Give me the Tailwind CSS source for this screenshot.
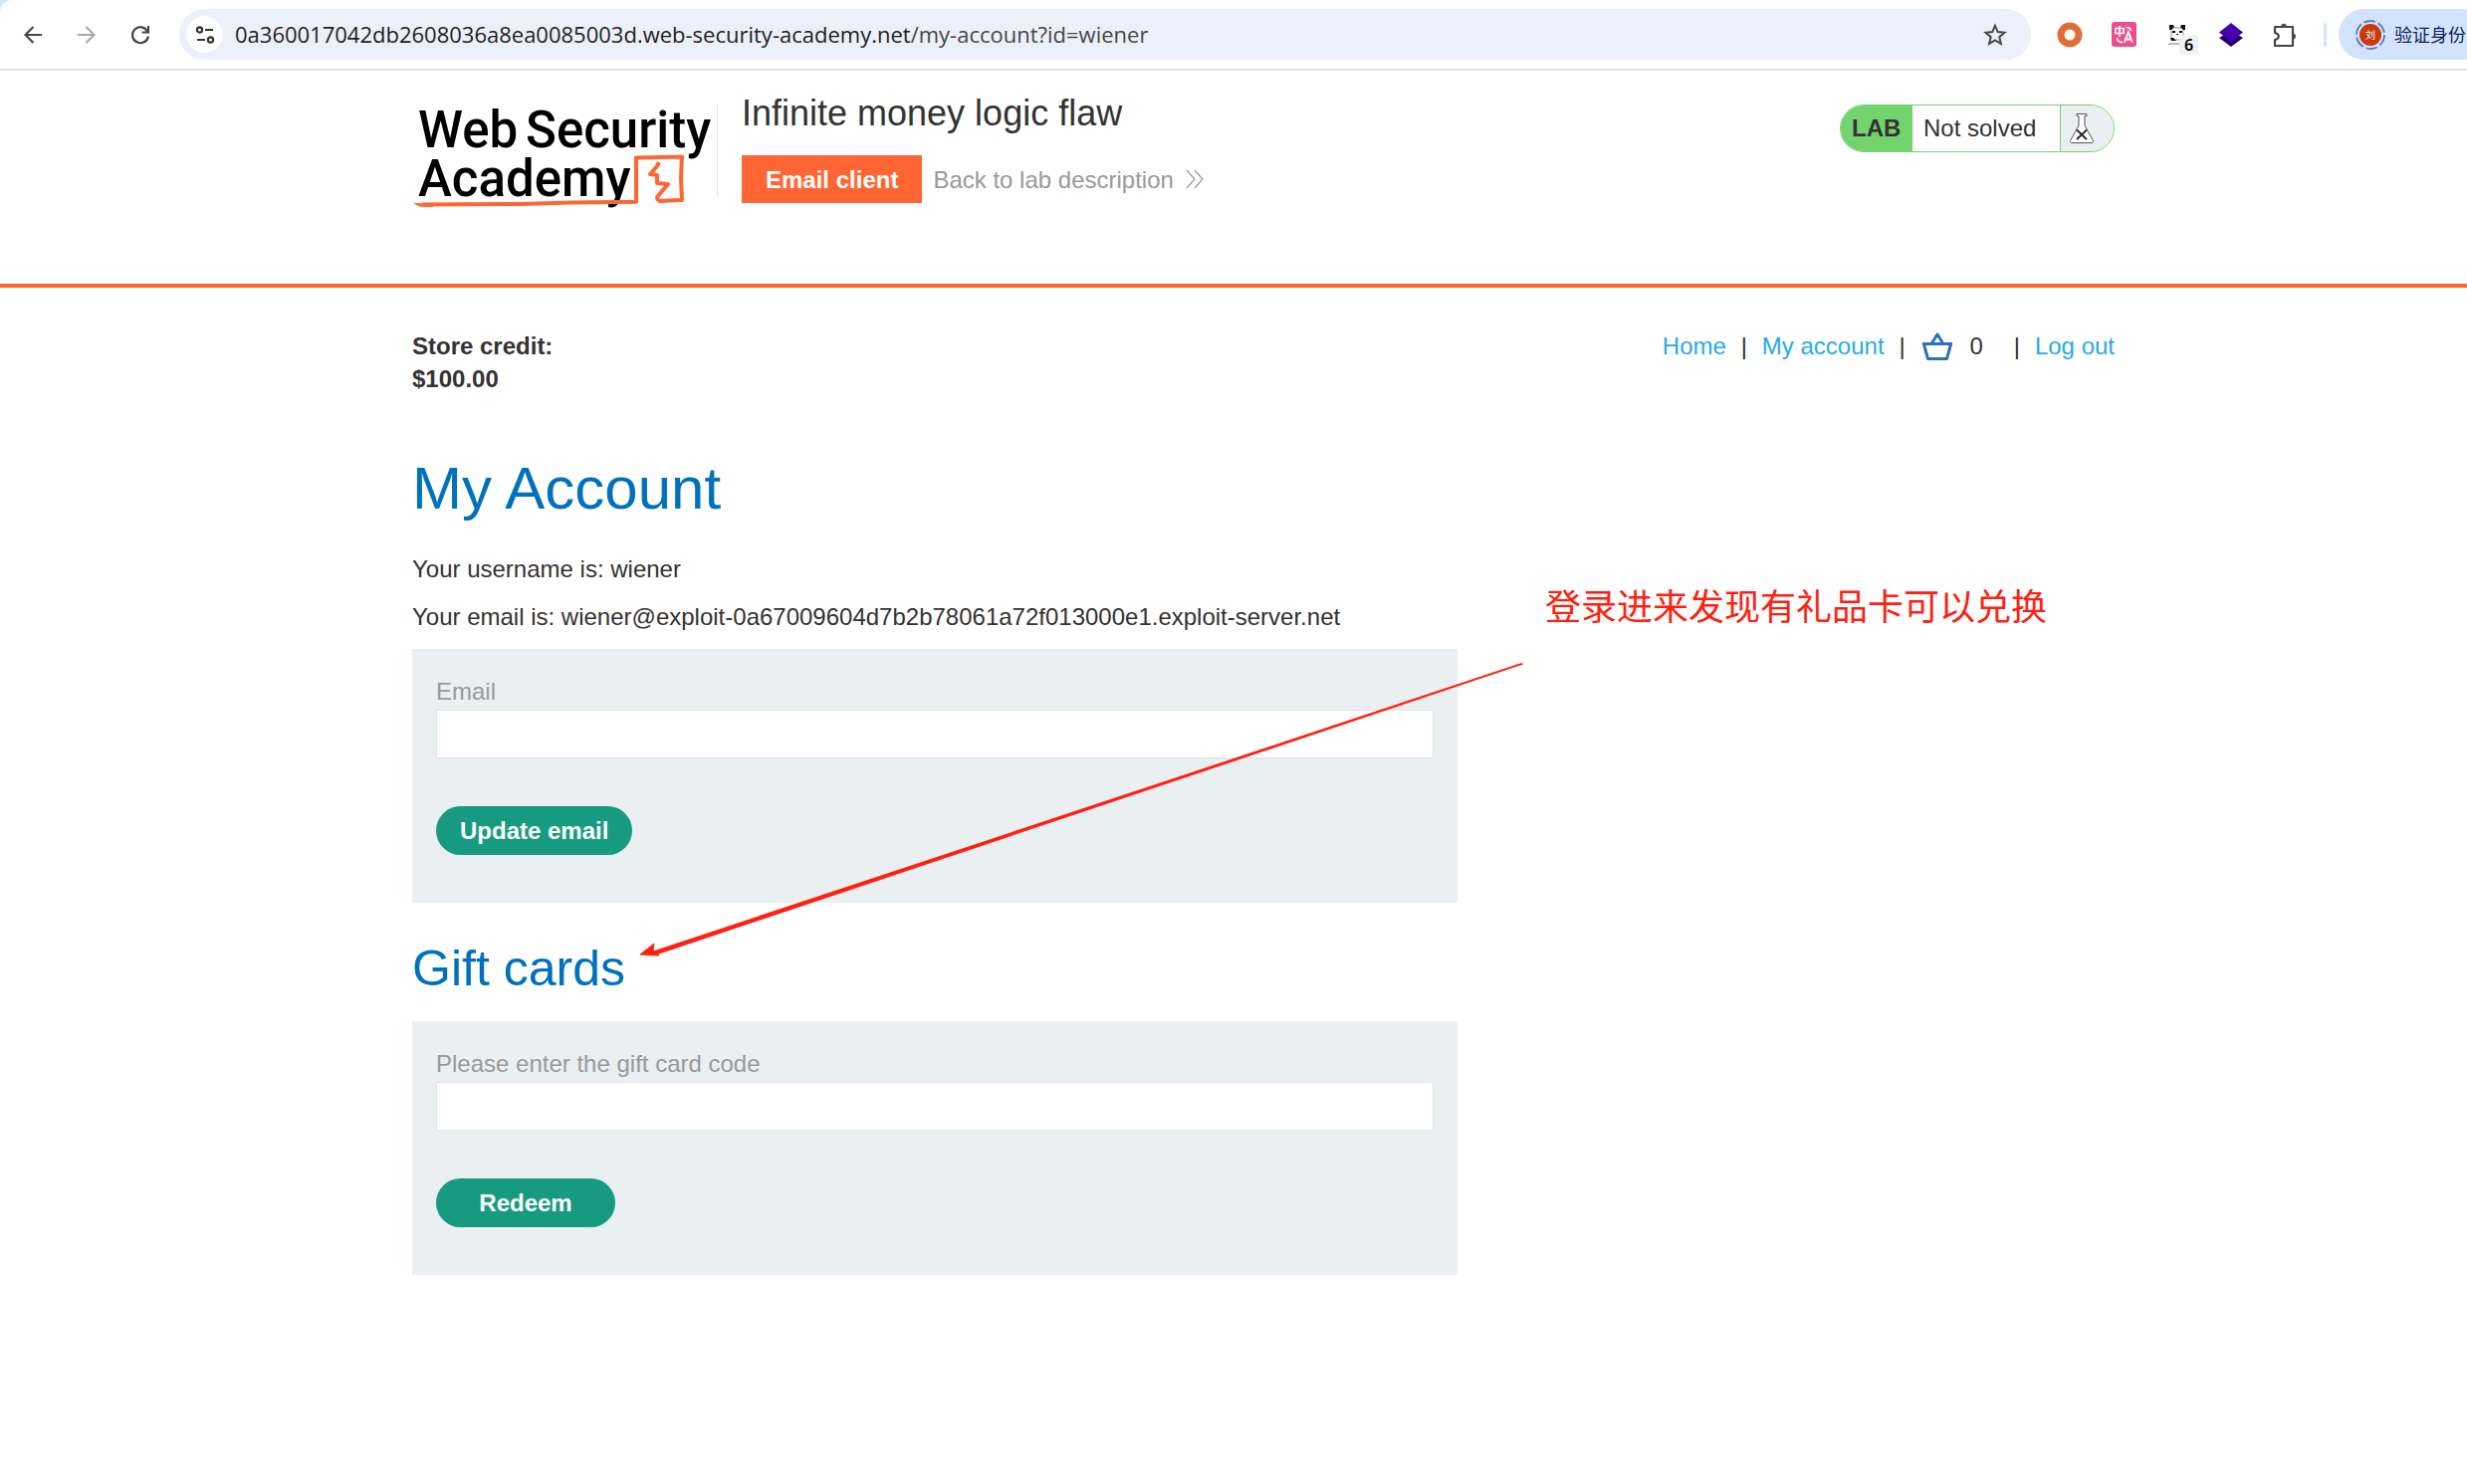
<!DOCTYPE html>
<html lang="en">
<head>
    <meta charset="UTF-8">
    <meta name="viewport" content="width=device-width, initial-scale=1.0">
    <title>Infinite money logic flaw</title>
    <script src="https://cdn.jsdelivr.net/npm/@tailwindcss/browser@4"></script>
</head>
<body class="bg-white min-h-screen overflow-x-hidden font-['Liberation_Sans',Arial,sans-serif] text-[24px] leading-[33px] text-[#333332]">
    <!-- Browser toolbar -->
    <div class="bg-[#d3e3fd]">
        <div class="flex items-center bg-white rounded-tl-xl py-[9px] pl-[6px] border-b-2 border-[#e1e1e1] text-[#474747]">
            <button aria-label="Back" class="w-[54px] h-[51px] flex items-center justify-center">
                <svg class="w-[18px] h-[18px]" viewBox="0 0 18 18" fill="none" stroke="currentColor" stroke-width="2.2"><path d="M18 9H2M9.500 1L1.500 9l8 8"/></svg>
            </button>
            <button aria-label="Forward" class="w-[54px] h-[51px] flex items-center justify-center text-[#a9a9a9]">
                <svg class="w-[18px] h-[18px]" viewBox="0 0 18 18" fill="none" stroke="currentColor" stroke-width="2.2"><path d="M0 9h16M8.500 1l8 8-8 8"/></svg>
            </button>
            <button aria-label="Reload" class="w-[54px] h-[51px] flex items-center justify-center">
                <svg class="w-[20px] h-[20px]" viewBox="0 0 20 20" fill="none" stroke="currentColor" stroke-width="2.2"><path d="M17.200 6.500A8 8 0 1 0 18 11.500M18 1v6.500h-6.500"/></svg>
            </button>
            <div class="flex flex-1 min-w-0 items-center h-[51px] ml-3 pl-[7px] pr-[24px] rounded-full bg-[#ebf0fa]">
                <button aria-label="Site information" class="w-[37px] h-[37px] rounded-full bg-white flex items-center justify-center text-[#333]">
                    <svg class="w-[20px] h-[20px]" viewBox="0 0 20 20" fill="none" stroke="currentColor" stroke-width="2.2"><circle cx="4.500" cy="5" r="2.600"/><path d="M10 5h8M2 15h8"/><circle cx="15.500" cy="15" r="2.600"/></svg>
                </button>
                <div class="flex-1 ml-[12px] whitespace-nowrap font-['Open_Sans',sans-serif] text-[22px] text-[#1f1f1f]">0a360017042db2608036a8ea0085003d.web-security-academy.net<span class="text-[#474747]">/my-account?id=wiener</span></div>
                <button aria-label="Bookmark">
                    <svg class="w-[24px] h-[24px]" viewBox="0 0 24 24" fill="none" stroke="currentColor" stroke-width="2"><path d="M12 2.800l2.700 6.300 6.800.6-5.200 4.500 1.600 6.700-5.900-3.600-5.900 3.600 1.600-6.700L2.500 9.700l6.800-.6z"/></svg>
                </button>
            </div>
            <div class="flex ml-3">
                <button aria-label="Proxy extension" class="w-[54px] h-[51px] flex items-center justify-center">
                    <svg class="w-[26px] h-[26px]" viewBox="0 0 26 26"><circle cx="13" cy="13" r="9" fill="none" stroke="#e06c36" stroke-width="7"/></svg>
                </button>
                <button aria-label="Translate extension" class="w-[54px] h-[51px] flex items-center justify-center">
                    <svg class="w-[25px] h-[25px]" viewBox="0 0 25 25" fill="none" stroke="#fff" stroke-width="1.700"><rect width="25" height="25" rx="3" fill="#ee4e8f" stroke="none"/><path d="M4 6.500h8v5H4zM8 4v11M14.500 5.500c3 0 5 .5 5 3.500M5.500 16c0 3.500 2 4.500 5.500 4.500"/><path stroke-width="2" d="M12.800 20.500l4-10 4 10M14 17.500h5.500"/></svg>
                </button>
                <button aria-label="Panda extension" class="relative w-[54px] h-[51px] flex items-center justify-center">
                    <svg class="w-[18px] h-[22px]" viewBox="0 0 18 22"><path d="M3 4v9c0 2 3 3 6 3s6-1 6-3V4z" fill="#fff" stroke="#999"/><path d="M1 1h4l1 2-3 3H1zM13 1h4v5h-2l-3-3zM4 7h3v2H4zM11 7h3v2h-3zM2 14h3l3 3H3zM8 10h2v1H8z" fill="#111"/><path d="M0 20h12" stroke="#777"/></svg>
                    <span class="absolute left-[29px] top-[26px] w-[19px] h-[20px] rounded-sm bg-[#f1f1f1] font-['Noto_Sans',sans-serif] font-semibold text-[16px] leading-[20px] text-center text-black">6</span>
                </button>
                <button aria-label="Layers extension" class="w-[54px] h-[51px] flex items-center justify-center">
                    <svg class="w-[26px] h-[26px]" viewBox="0 0 26 26"><path d="M1 16l5-3h14l5 3-12 9z" fill="#220070"/><path d="M13 1l12 9.500L13 20 1 10.500z" fill="#4500ac"/></svg>
                </button>
                <button aria-label="Extensions" class="w-[54px] h-[51px] flex items-center justify-center">
                    <svg class="w-[26px] h-[26px]" viewBox="0 0 26 26" fill="none" stroke="currentColor" stroke-width="2.200" stroke-linejoin="round"><path d="M3 5h18v19H3v-6c5-1 5-6 0-7z"/><path d="M9 5c0-4.500 6-4.500 6 0zM21 11.500c4 0 4 6 0 6z" fill="currentColor" stroke="none"/></svg>
                </button>
            </div>
            <div class="w-[3px] h-[24px] ml-3 rounded-full bg-[#d3e3fd]"></div>
            <div class="w-[129px] ml-3 overflow-hidden">
                <button class="flex items-center w-[150px] h-[51px] pl-[16px] rounded-full bg-[#d3e3fd] text-[#0b2352] whitespace-nowrap">
                    <svg class="w-[32px] h-[32px]" viewBox="0 0 32 32"><circle cx="16" cy="16" r="14" fill="none" stroke="#5a7bb5" stroke-width="1.800" stroke-dasharray="11.700 3"/><circle cx="16" cy="16" r="11" fill="#c9380a"/><text x="16" y="20" text-anchor="middle" font-family="Noto Sans CJK SC" font-size="10" fill="#fff">刘</text></svg>
                    <span class="ml-2 font-['Noto_Sans_CJK_SC',sans-serif] text-[18px]">验证身份</span>
                </button>
            </div>
        </div>
    </div>

    <!-- Lab header -->
    <header class="flex items-start pl-[414px] pr-[354px] pt-[23px] pb-[69px] border-b-4 border-[#ff6633]">
        <a href="#" aria-label="Web Security Academy">
            <svg class="w-[306px] h-[122px]" viewBox="0 -11 306 122">
                <g font-family="Roboto" font-weight="500" font-size="51" fill="#000">
                    <text x="6" y="43">Web</text>
                    <text x="114" y="43">Security</text>
                    <text x="6" y="92">Academy</text>
                </g>
                <g fill="none" stroke="#ff6633" stroke-linejoin="round">
                    <path stroke-width="4" d="M10 100.500L110 100l50-1.500 65-.7V53.500l46-1-1 21 1 22.500-24 1"/>
                    <path stroke-width="4" d="M247 97l-1-4 11-13-11-1v-8l-7-1 7-8 2-4"/>
                </g>
                <path d="M1 99l20 .5v3.500l-14-.5z" fill="#ff6633"/>
            </svg>
        </a>
        <div class="w-px h-[93px] mt-[11px] bg-[#e4e4e4]"></div>
        <div class="ml-6">
            <h2 class="text-[36px] leading-[40px]">Infinite money logic flaw</h2>
            <div class="flex items-center mt-[22px]">
                <a href="#" class="h-12 px-6 leading-[50px] bg-[#ff6633] font-bold text-white">Email client</a>
                <a href="#" class="flex items-center ml-[11px] text-[#999]">Back to lab description
                    <svg class="w-[18px] h-[20px] ml-3" viewBox="0 0 18 20" fill="none" stroke="currentColor" stroke-width="1.200"><path d="M1 1l8 9-8 9M9 1l8 9-8 9"/></svg>
                </a>
            </div>
        </div>
        <div class="flex h-12 mt-[11px] ml-auto rounded-full border border-[#73d36f] overflow-hidden leading-[46px]">
            <p class="w-[72px] pl-[11px] bg-[#73d36f] font-bold">LAB</p>
            <p class="w-[148px] pl-[11px]">Not solved</p>
            <span class="w-[54px] pl-2 border-l border-[#73d36f] bg-[#eaeff2] flex items-center">
                <svg class="w-[26px] h-[32px]" viewBox="0 0 26 32" fill="#fff" stroke="#555"><path d="M8 1.500h10v2h-2V13l8.500 15.500c.5 1-.2 2-1.500 2H3c-1.300 0-2-1-1.500-2L10 13V3.500H8z"/><path stroke="#222" stroke-width="1.800" d="M8 17.500l10 9.500M18 17.500L8 27"/></svg>
            </span>
        </div>
    </header>

    <main class="relative pl-[414px] pr-[354px] pt-[42px] pb-12">
        <div class="flex items-start justify-between">
            <p class="font-bold">Store credit:<br>$100.00</p>
            <nav class="flex items-center">
                <a href="#" class="text-[#29abe2]">Home</a>
                <span class="w-9 text-center">|</span>
                <a href="#" class="text-[#29abe2]">My account</a>
                <span class="w-9 text-center">|</span>
                <a href="#" aria-label="Basket">
                    <svg class="w-[34px] h-[30px]" viewBox="0 0 34 30" fill="none" stroke="#2b71b8" stroke-width="3" stroke-linejoin="round"><path d="M2 12.500h30M3.500 13l4 14.500h19l4-14.500M11 12.500l6-9.500 6 9.500"/></svg>
                </a>
                <span class="mx-4">0</span>
                <span class="w-9 text-center">|</span>
                <a href="#" class="text-[#29abe2]">Log out</a>
            </nav>
        </div>

        <h1 class="mt-[60px] text-[60px] leading-[68px] text-[#0071bc]">My Account</h1>
        <p class="mt-[30px]">Your username is: wiener</p>
        <p class="mt-[15px]">Your email is: wiener@exploit-0a67009604d7b2b78061a72f013000e1.exploit-server.net</p>

        <form class="max-w-[1050px] mt-4 px-6 pt-[26px] pb-12 bg-[#eaeff2]">
            <label for="email" class="block text-[#999]">Email</label>
            <input id="email" type="email" class="block w-full h-[49px] mt-[2px] px-3 bg-white border border-[#e4e4e4]">
            <button type="button" class="h-[49px] mt-12 px-6 rounded-full bg-[#179b80] font-bold text-white">Update email</button>
        </form>

        <h2 class="mt-[38px] text-[50px] leading-[56px] text-[#0071bc]">Gift cards</h2>
        <form class="max-w-[1050px] mt-[25px] px-6 pt-[26px] pb-12 bg-[#eaeff2]">
            <label for="gift-card" class="block text-[#999]">Please enter the gift card code</label>
            <input id="gift-card" type="text" class="block w-full h-[49px] mt-[2px] px-3 bg-white border border-[#e4e4e4]">
            <button type="button" class="h-[49px] mt-12 w-[180px] rounded-full bg-[#179b80] font-bold text-white">Redeem</button>
        </form>

        <!-- Annotation over the page -->
        <svg class="absolute left-[642px] top-[376px] w-[890px] h-[300px] pointer-events-none" viewBox="0 0 890 300" fill="#ff2010">
            <path d="M886.500 1L14 290.500l1.500 4.500L888 2.500z"/>
            <path d="M1 294l14-11-1 6 3 5 3 1z" stroke="#ff2010" stroke-linejoin="round"/>
        </svg>
        <p class="absolute left-[1552px] top-[292px] whitespace-nowrap font-['Noto_Sans_CJK_SC',sans-serif] text-[36px] leading-[52px] text-[#ff2010]">登录进来发现有礼品卡可以兑换</p>
    </main>
</body>
</html>
